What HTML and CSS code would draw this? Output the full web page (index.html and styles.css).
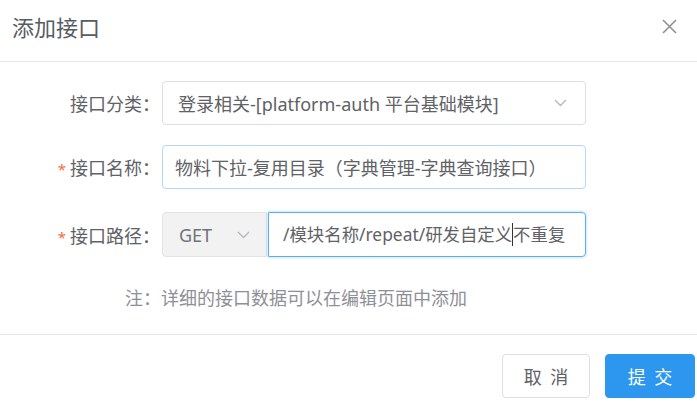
FILE: index.html
```html
<!DOCTYPE html>
<html>
<head>
<meta charset="utf-8">
<link rel="stylesheet" href="styles.css">
</head>
<body>
<div class="dialog">
  <div class="header">
    <span class="title">添加接口</span>
    <svg class="close" width="15" height="15" viewBox="0 0 15 15"><path d="M1 1L14 14M14 1L1 14" stroke="#8e9099" stroke-width="1.6" fill="none"/></svg>
  </div>
  <div class="body">
    <div class="row r1">
      <div class="label">接口分类：</div>
      <div class="field select">
        <span class="val">登录相关-[platform-auth 平台基础模块]</span>
        <svg class="arrow" width="13" height="8" viewBox="0 0 13 8"><path d="M1 1L6.5 6.5L12 1" stroke="#b4b6bd" stroke-width="1.3" fill="none"/></svg>
      </div>
    </div>
    <div class="row r2">
      <div class="label"><span class="req">*</span>接口名称：</div>
      <div class="field input hover">
        <span class="val">物料下拉-复用目录（字典管理-字典查询接口）</span>
      </div>
    </div>
    <div class="row r3">
      <div class="label"><span class="req">*</span>接口路径：</div>
      <div class="combo">
        <div class="field method">
          <span class="val">GET</span>
          <svg class="arrow" width="13" height="8" viewBox="0 0 13 8"><path d="M1 1L6.5 6.5L12 1" stroke="#b4b6bd" stroke-width="1.3" fill="none"/></svg>
        </div>
        <div class="field input focus">
          <span class="val">/模块名称/repeat/研发自定义<span class="caret"></span>不重复</span>
        </div>
      </div>
    </div>
    <div class="note">注：详细的接口数据可以在编辑页面中添加</div>
  </div>
  <div class="footer">
    <button class="btn cancel">取 消</button>
    <button class="btn primary">提 交</button>
  </div>
</div>
</body>
</html>
```

FILE: styles.css
```css
html, body {
  margin: 0;
  padding: 0;
  background: #fff;
}
body {
  font-family: "Noto Sans", "Noto Sans CJK SC", sans-serif;
  color: #606266;
}
.dialog {
  width: 697px;
  height: 409px;
  display: flex;
  flex-direction: column;
}
.header {
  height: 61px;
  border-bottom: 1px solid #e8e8e8;
  display: flex;
  align-items: center;
  justify-content: space-between;
  padding: 0 20px 0 12px;
}
.title {
  font-size: 22px;
  color: #595b63;
  letter-spacing: 0;
  margin-top: -9px;
}
.close {
  margin-top: -8px;
}
.body {
  padding-top: 18px;
  height: 273px;
  box-sizing: border-box;
  border-bottom: 1px solid #e8e8e8;
}
.row {
  display: flex;
  align-items: center;
  height: 44px;
}
.r1 { margin-top: 1px; }
.r2 { margin-top: 20px; }
.r3 { margin-top: 23px; height: 45px; }
.label {
  width: 160px;
  text-align: right;
  font-size: 18px;
  color: #606266;
  margin-right: 2px;
  flex-shrink: 0;
}
.req {
  color: #f56c3c;
  margin-right: 4px;
  font-size: 15px;
}
.field {
  box-sizing: border-box;
  height: 100%;
  border: 1px solid #dcdfe6;
  border-radius: 4px;
  display: flex;
  align-items: center;
  font-size: 18px;
  color: #606266;
  white-space: nowrap;
  overflow: hidden;
}
.select {
  width: 424px;
  padding: 0 18px 0 15px;
  justify-content: space-between;
}
.input {
  width: 424px;
  padding: 0 12px;
}
.hover {
  border-color: #b3d8ff;
}
.combo {
  display: flex;
  height: 100%;
  width: 424px;
}
.method {
  width: 105px;
  flex-shrink: 0;
  background: #f2f2f3;
  border-color: #e2e3e6;
  border-radius: 4px 0 0 4px;
  padding: 0 16px 0 16px;
  justify-content: space-between;
  color: #707279;
}
.focus {
  flex: 1;
  width: auto;
  margin-left: 1px;
  border: 1px solid #59b0f5;
  box-shadow: 0 0 3px rgba(64, 158, 255, 0.5);
  border-radius: 0 4px 4px 0;
  padding: 0 10px 0 14px;
  font-size: 17.4px;
}
.caret {
  display: inline-block;
  width: 1px;
  height: 23px;
  background: #333;
  vertical-align: middle;
  margin: 0 0 2px 0;
}
.note {
  margin-top: 27px;
  padding-left: 125px;
  font-size: 18px;
  color: #8e9096;
}
.footer {
  display: flex;
  justify-content: flex-end;
  align-items: flex-start;
  padding: 19px 2px 0 0;
  gap: 15px;
}
.btn {
  font-family: "Noto Sans", "Noto Sans CJK SC", sans-serif;
  font-size: 18px;
  height: 44px;
  border-radius: 4px;
  cursor: pointer;
  letter-spacing: 2px;
  padding: 0 0 0 2px;
}
.cancel {
  width: 88px;
  background: #fff;
  border: 1px solid #dcdfe6;
  color: #606266;
}
.primary {
  width: 90px;
  background: #2d97f0;
  border: 1px solid #2d97f0;
  color: #fff;
}
```
